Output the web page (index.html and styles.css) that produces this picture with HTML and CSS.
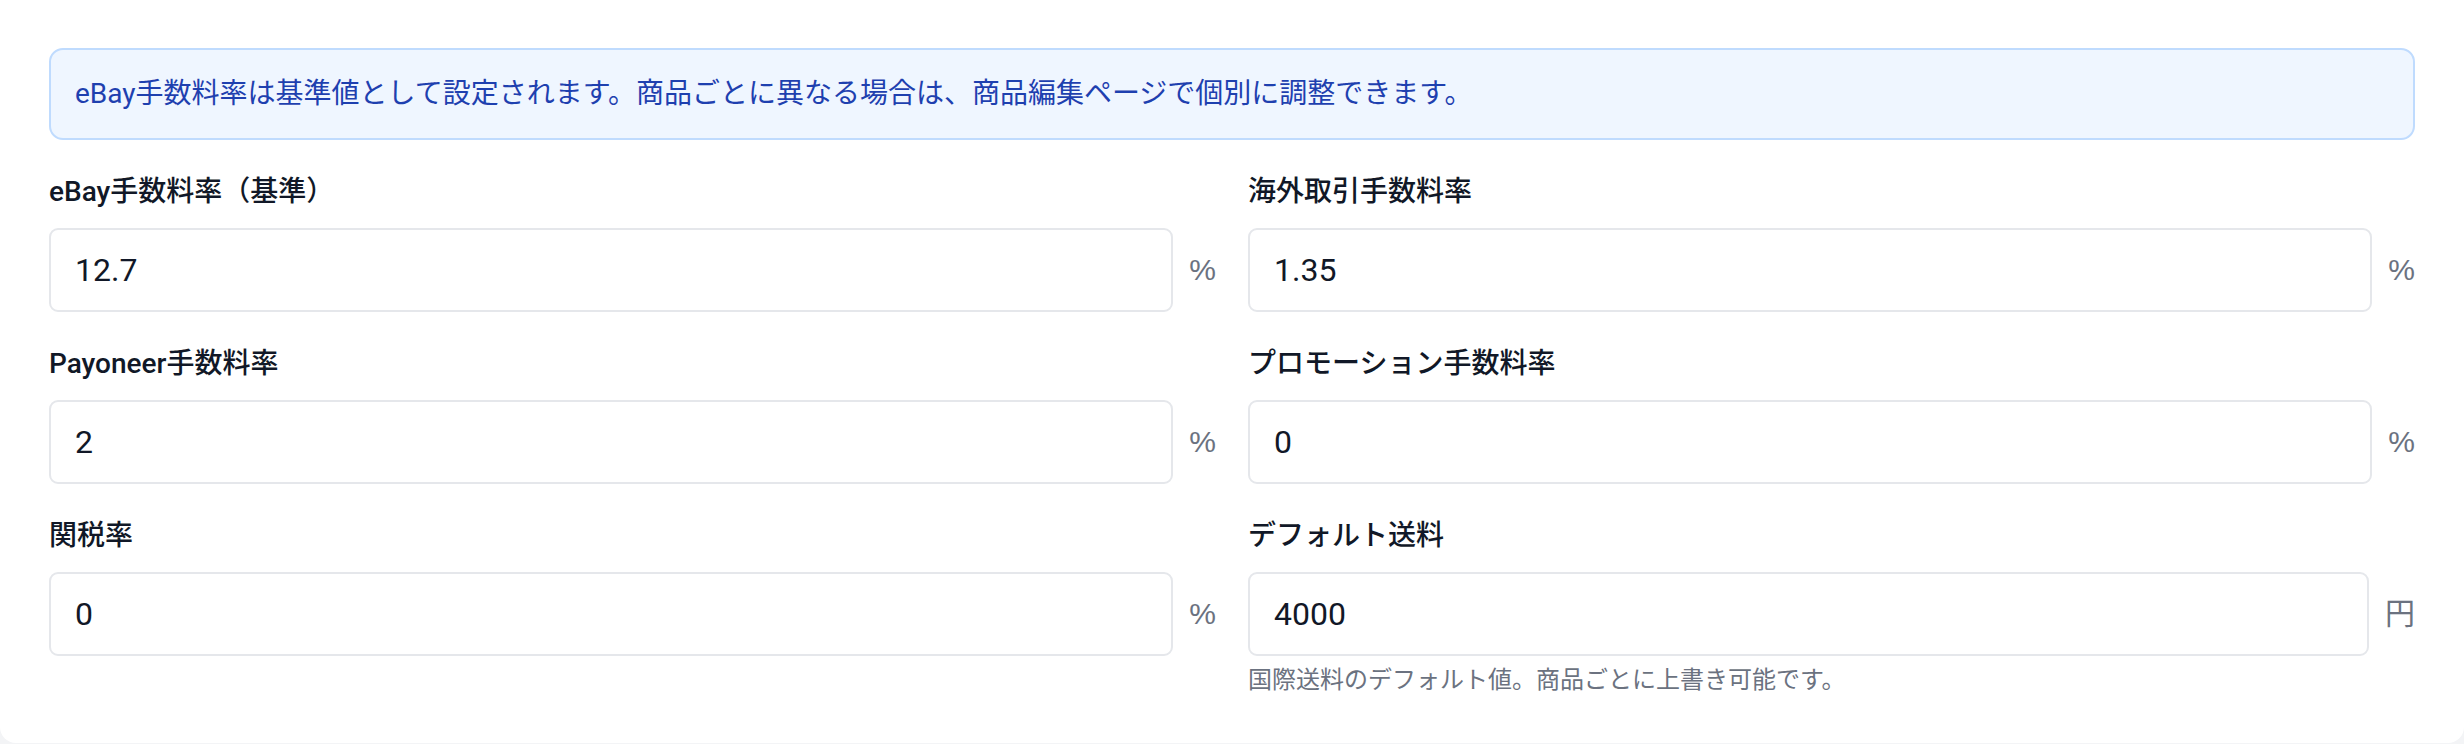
FILE: index.html
```html
<!DOCTYPE html>
<html lang="ja">
<head>
<meta charset="utf-8">
<title>手数料設定</title>
<link rel="stylesheet" href="styles.css">
</head>
<body>
<div class="card">
  <div class="alert">eBay手数料率は基準値として設定されます。商品ごとに異なる場合は、商品編集ページで個別に調整できます。</div>
  <div class="grid">
    <div class="field">
      <label class="label">eBay手数料率（基準）</label>
      <div class="input-row"><div class="input">12.7</div><span class="suffix">%</span></div>
    </div>
    <div class="field">
      <label class="label">海外取引手数料率</label>
      <div class="input-row"><div class="input">1.35</div><span class="suffix">%</span></div>
    </div>
    <div class="field">
      <label class="label">Payoneer手数料率</label>
      <div class="input-row"><div class="input">2</div><span class="suffix">%</span></div>
    </div>
    <div class="field">
      <label class="label">プロモーション手数料率</label>
      <div class="input-row"><div class="input">0</div><span class="suffix">%</span></div>
    </div>
    <div class="field">
      <label class="label">関税率</label>
      <div class="input-row"><div class="input">0</div><span class="suffix">%</span></div>
    </div>
    <div class="field">
      <label class="label">デフォルト送料</label>
      <div class="input-row"><div class="input">4000</div><span class="suffix">円</span></div>
      <p class="help">国際送料のデフォルト値。商品ごとに上書き可能です。</p>
    </div>
  </div>
</div>
</body>
</html>
```
FILE: styles.css
```css
html, body {
  margin: 0;
  padding: 0;
}
body {
  background: #f3f4f6;
  font-family: Roboto, "Noto Sans CJK JP", sans-serif;
  width: 2464px;
  height: 744px;
  overflow: hidden;
}
.card {
  background: #ffffff;
  border-radius: 0 0 16px 16px;
  padding: 48px 49px 47px 49px;
}
.alert {
  background: #eff6ff;
  border: 2px solid #bfdbfe;
  border-radius: 14px;
  padding: 24px 24px;
  color: #1e40af;
  font-size: 28px;
  line-height: 40px;
  margin-bottom: 32px;
}
.grid {
  display: grid;
  grid-template-columns: 1fr 1fr;
  column-gap: 32px;
  row-gap: 32px;
}
.field {
  display: flex;
  flex-direction: column;
}
.label {
  display: block;
  font-size: 28px;
  line-height: 40px;
  font-weight: 500;
  color: #111827;
  margin-bottom: 16px;
}
.input-row {
  display: flex;
  align-items: center;
  gap: 16px;
}
.input {
  flex: 1;
  box-sizing: border-box;
  height: 84px;
  border: 2px solid #e5e7eb;
  border-radius: 9px;
  padding: 16px 24px;
  font-size: 32px;
  line-height: 48px;
  color: #111827;
  background: #ffffff;
}
.suffix {
  font-family: "Liberation Sans", "Noto Sans CJK JP", sans-serif;
  font-size: 30px;
  line-height: 40px;
  color: #6b7280;
}
.help {
  margin: 8px 0 0 0;
  font-size: 24px;
  line-height: 32px;
  color: #6b7280;
}
```
